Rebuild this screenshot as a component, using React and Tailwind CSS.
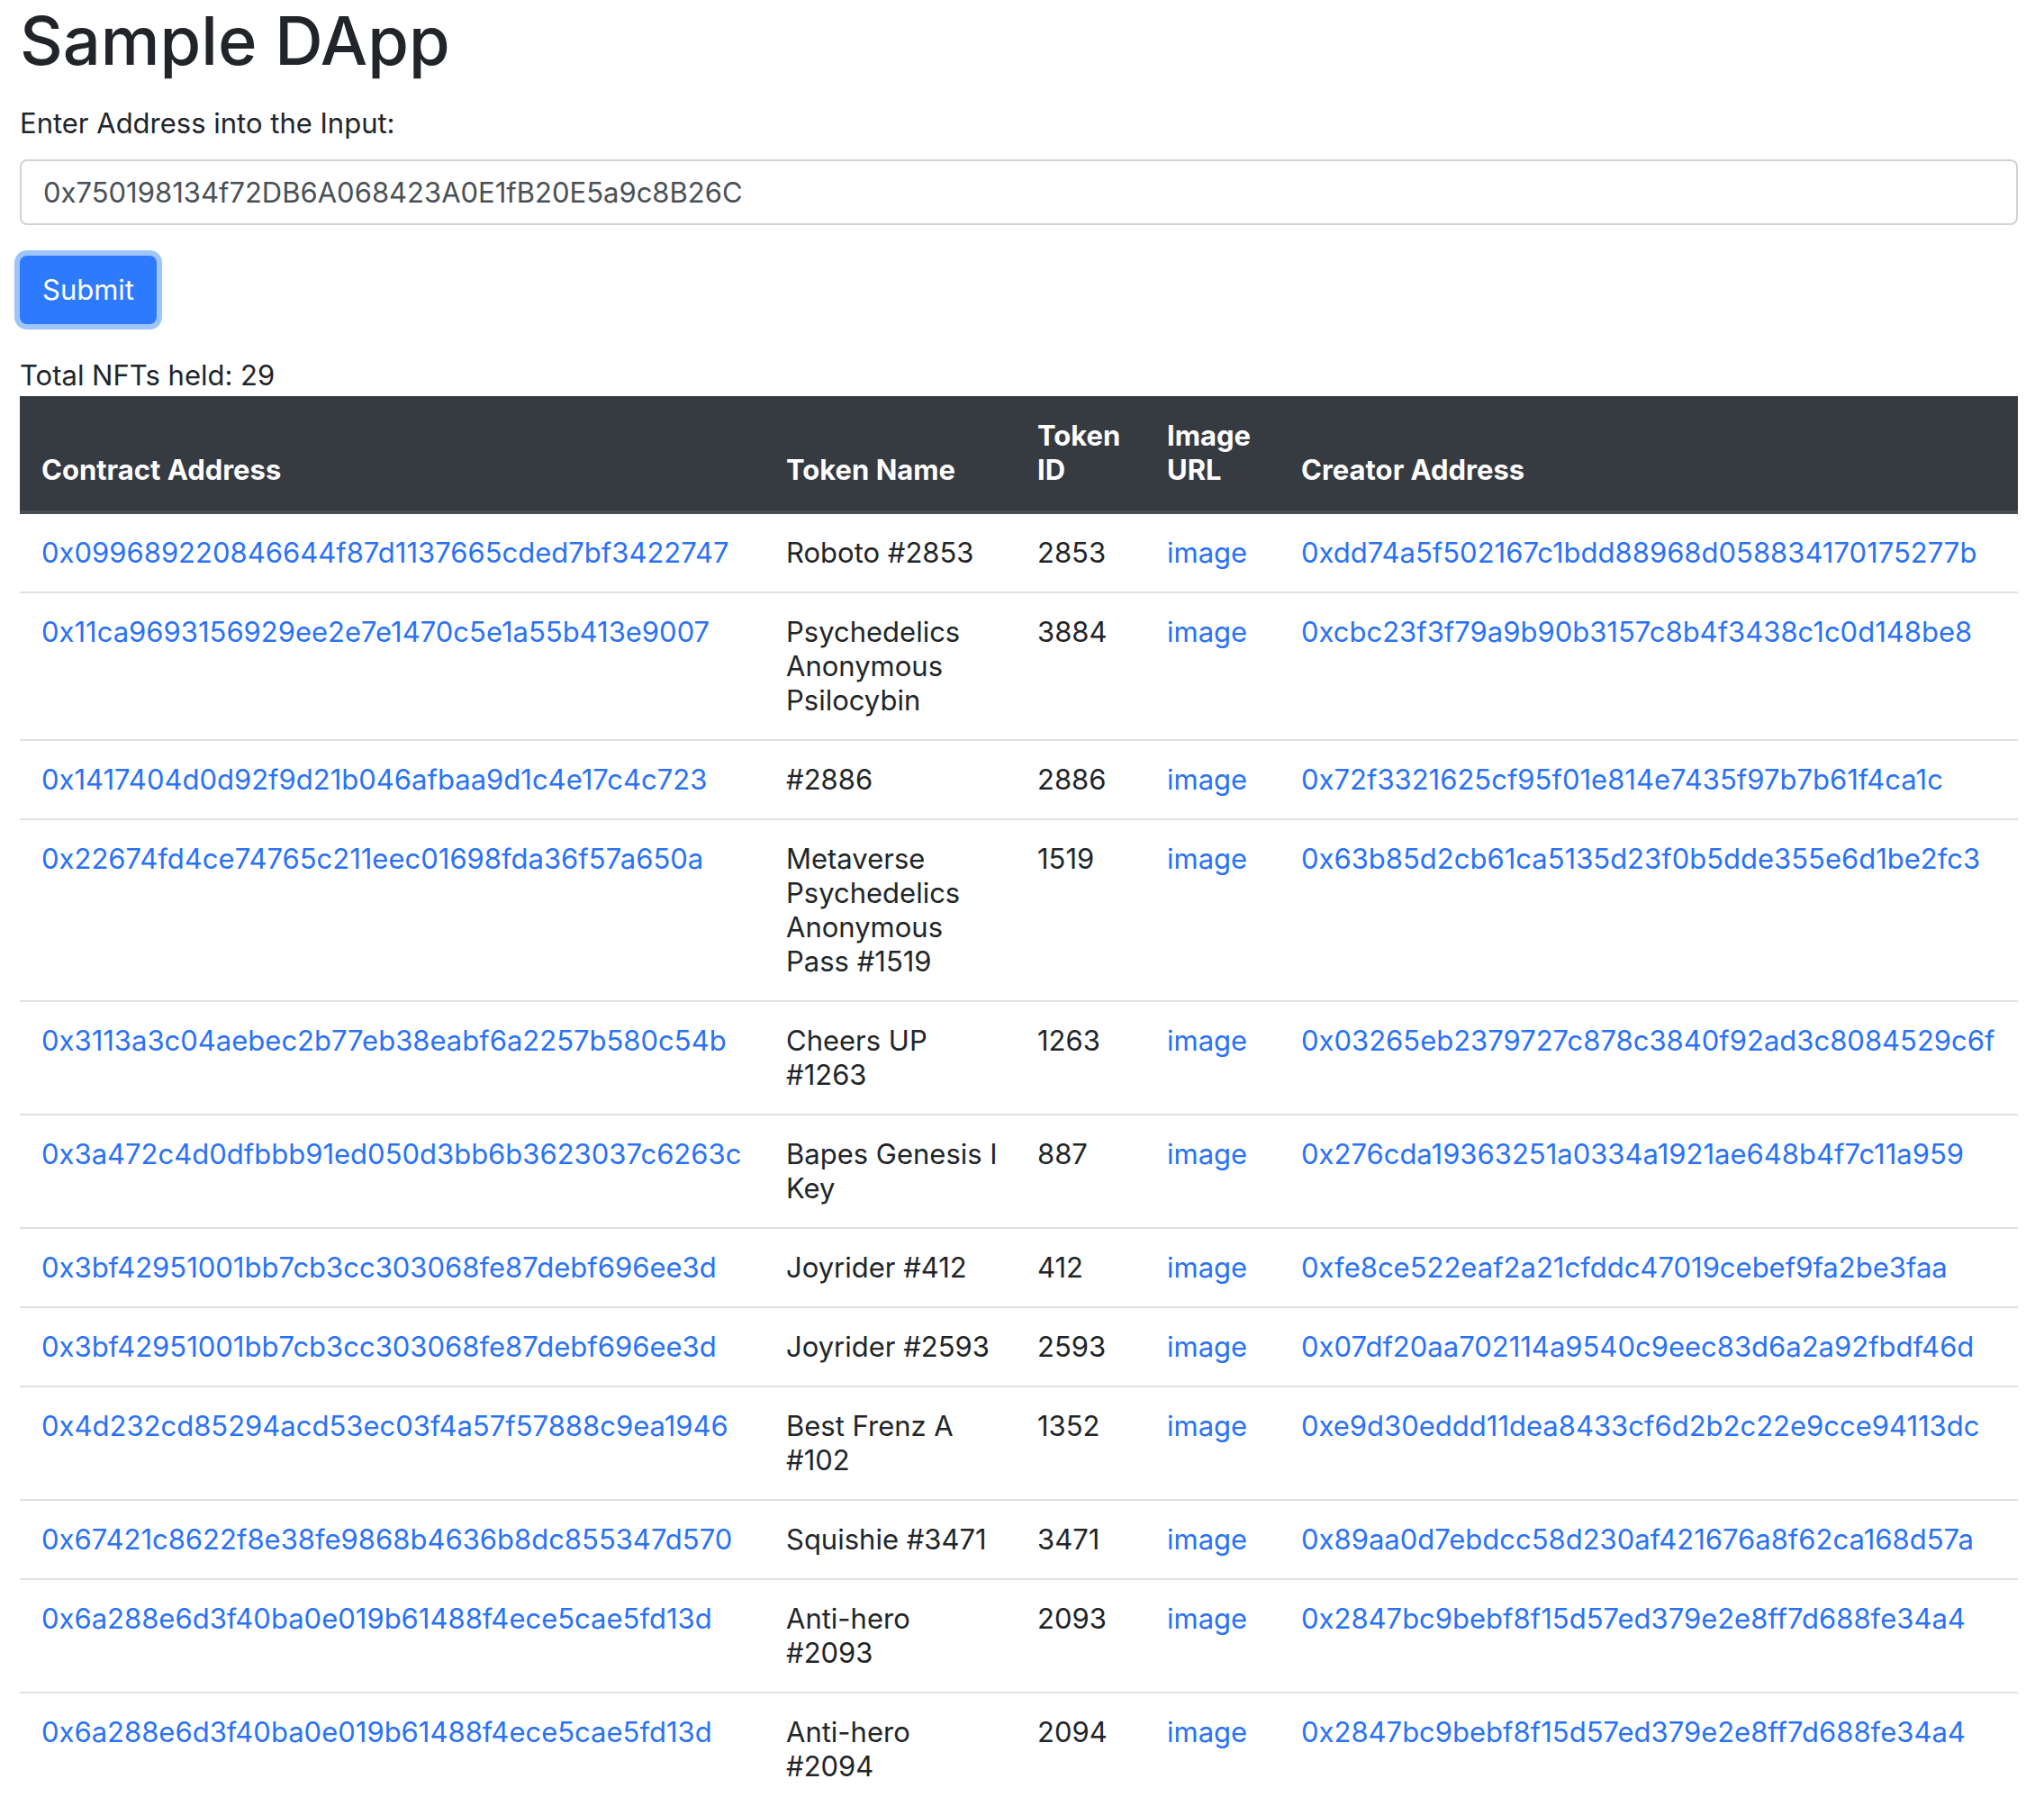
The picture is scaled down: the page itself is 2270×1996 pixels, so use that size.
import { useState } from 'react'

const nfts = [
  { contract: '0x099689220846644f87d1137665cded7bf3422747', name: 'Roboto #2853', id: '2853', creator: '0xdd74a5f502167c1bdd88968d058834170175277b' },
  { contract: '0x11ca9693156929ee2e7e1470c5e1a55b413e9007', name: 'Psychedelics Anonymous Psilocybin', id: '3884', creator: '0xcbc23f3f79a9b90b3157c8b4f3438c1c0d148be8' },
  { contract: '0x1417404d0d92f9d21b046afbaa9d1c4e17c4c723', name: '#2886', id: '2886', creator: '0x72f3321625cf95f01e814e7435f97b7b61f4ca1c' },
  { contract: '0x22674fd4ce74765c211eec01698fda36f57a650a', name: 'Metaverse Psychedelics Anonymous Pass #1519', id: '1519', creator: '0x63b85d2cb61ca5135d23f0b5dde355e6d1be2fc3' },
  { contract: '0x3113a3c04aebec2b77eb38eabf6a2257b580c54b', name: 'Cheers UP #1263', id: '1263', creator: '0x03265eb2379727c878c3840f92ad3c8084529c6f' },
  { contract: '0x3a472c4d0dfbbb91ed050d3bb6b3623037c6263c', name: 'Bapes Genesis I Key', id: '887', creator: '0x276cda19363251a0334a1921ae648b4f7c11a959' },
  { contract: '0x3bf42951001bb7cb3cc303068fe87debf696ee3d', name: 'Joyrider #412', id: '412', creator: '0xfe8ce522eaf2a21cfddc47019cebef9fa2be3faa' },
  { contract: '0x3bf42951001bb7cb3cc303068fe87debf696ee3d', name: 'Joyrider #2593', id: '2593', creator: '0x07df20aa702114a9540c9eec83d6a2a92fbdf46d' },
  { contract: '0x4d232cd85294acd53ec03f4a57f57888c9ea1946', name: 'Best Frenz A #102', id: '1352', creator: '0xe9d30eddd11dea8433cf6d2b2c22e9cce94113dc' },
  { contract: '0x67421c8622f8e38fe9868b4636b8dc855347d570', name: 'Squishie #3471', id: '3471', creator: '0x89aa0d7ebdcc58d230af421676a8f62ca168d57a' },
  { contract: '0x6a288e6d3f40ba0e019b61488f4ece5cae5fd13d', name: 'Anti-hero #2093', id: '2093', creator: '0x2847bc9bebf8f15d57ed379e2e8ff7d688fe34a4' },
  { contract: '0x6a288e6d3f40ba0e019b61488f4ece5cae5fd13d', name: 'Anti-hero #2094', id: '2094', creator: '0x2847bc9bebf8f15d57ed379e2e8ff7d688fe34a4' },
]

export default function App() {
  const [address, setAddress] = useState('0x750198134f72DB6A068423A0E1fB20E5a9c8B26C')

  return (
    <div className="min-h-screen bg-white pl-[22px] pr-[29px] text-[31px] leading-[38px] text-[#212529] font-['Inter','Liberation_Sans',sans-serif]">
      <h1 className="text-[74px] leading-[91px] font-medium mb-[27px]">Sample DApp</h1>

      <label className="block mb-[21px]">Enter Address into the Input:</label>
      <input
        className="block w-full h-[73px] px-[24px] border-2 border-[#ced4da] rounded-[8px] text-[#495057] outline-none"
        value={address}
        onChange={(e) => setAddress(e.target.value)}
      />

      {/* Submit button with focus ring */}
      <button className="mt-[34px] h-[76px] px-[25px] rounded-[8px] bg-[#2e7aff] text-white ring-[6px] ring-[#9ec5fe]">
        Submit
      </button>

      <p className="mt-[38px] mb-[4px]">Total NFTs held: 29</p>

      <table className="w-full table-fixed border-collapse">
        <colgroup>
          <col className="w-[827px]" />
          <col className="w-[279px]" />
          <col className="w-[144px]" />
          <col className="w-[149px]" />
          <col className="w-[820px]" />
        </colgroup>
        <thead className="bg-[#363a41] text-white">
          <tr>
            {['Contract Address', 'Token Name', 'Token ID', 'Image URL', 'Creator Address'].map((h) => (
              <th key={h} className="px-[24px] pt-[25px] pb-[26px] text-left align-bottom font-bold border-b-4 border-[#474d55]">
                {h}
              </th>
            ))}
          </tr>
        </thead>
        <tbody>
          {nfts.map((n, i) => (
            <tr key={i} className="border-b-2 border-[#dee2e6]">
              <td className="p-[24px] align-top">
                <a href="#" className="text-[#2a72f5]">{n.contract}</a>
              </td>
              <td className="pl-[24px] pr-[17px] py-[24px] align-top">{n.name}</td>
              <td className="p-[24px] align-top">{n.id}</td>
              <td className="p-[24px] align-top">
                <a href="#" className="text-[#2a72f5]">image</a>
              </td>
              <td className="p-[24px] align-top">
                <a href="#" className="text-[#2a72f5]">{n.creator}</a>
              </td>
            </tr>
          ))}
        </tbody>
      </table>
    </div>
  )
}
